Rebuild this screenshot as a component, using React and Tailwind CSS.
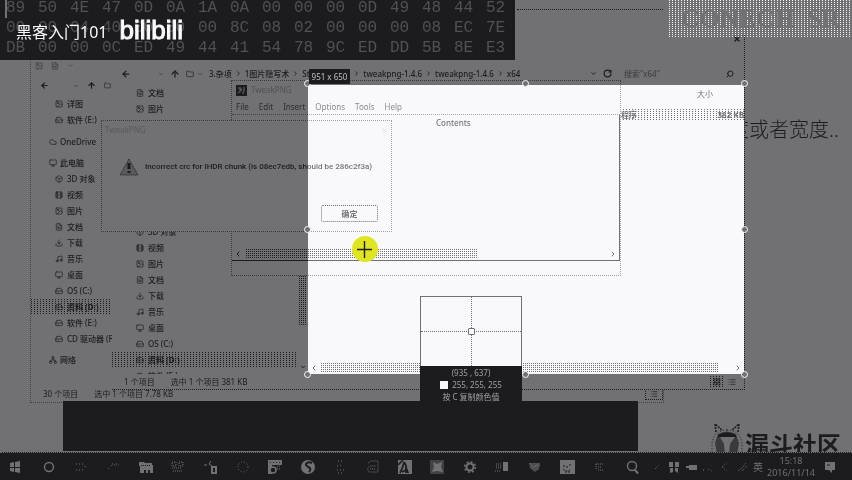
import React from "react";
import {
  ArrowLeft, ArrowUp, ChevronDown, ChevronLeft, ChevronRight, Cloud, Download, FileText, Folder,
  HardDrive, Image, LayoutGrid, List, Monitor, Music, Network, RotateCw, Search, Box, Film, X,
} from "lucide-react";

const DITHER = "bg-[conic-gradient(#1c1c1e_25%,transparent_0)] bg-[size:2px_2px]";
const DITHER_LOOSE = "bg-[conic-gradient(from_270deg_at_1px_1px,#1c1c1e_25%,transparent_0)] bg-[size:3px_2px]";

const HEX = [
  "89 50 4E 47 0D 0A 1A 0A 00 00 00 0D 49 48 44 52",
  "00 00 04 40 00 00 00 8C 08 02 00 00 00 08 EC 7E",
  "DB 00 00 0C ED 49 44 41 54 78 9C ED DD 5B 8E E3",
];

const PC_ITEMS = [
  [Box, "3D 对象"], [Film, "视频"], [Image, "图片"], [FileText, "文档"], [Download, "下载"],
  [Music, "音乐"], [Monitor, "桌面"], [HardDrive, "OS (C:)"], [HardDrive, "资料 (D:)"], [HardDrive, "软件 (E:)"],
];

function NavItem({ icon: Icon, label, root, selected, dither }) {
  return (
    <li className={selected ? dither : ""}>
      <button className={`flex h-4 w-full items-center whitespace-nowrap text-left ${root ? "gap-[3px] pl-[18px]" : "gap-1 pl-6"}`}>
        <Icon size={8} strokeWidth={2} className="shrink-0" />
        <span className={selected ? "font-bold" : "font-medium"}>{label}</span>
      </button>
    </li>
  );
}

function HexEditor() {
  return (
    <section className="absolute left-0 top-0 z-20 h-[60px] w-[515px] overflow-hidden bg-[#1c1c1e]">
      <div className="absolute left-[5px] top-0 h-[18px] w-[2px] bg-[#717173]" />
      <div className="-mt-[2px] flex flex-col pl-[6px] font-['Liberation_Mono',monospace] text-[16px] leading-[20px] text-[#515153]">
        {HEX.map((row, r) => (
          <div key={r} className="flex">
            {row.split(" ").map((b, i) => <span key={i} className="w-8 shrink-0">{b}</span>)}
          </div>
        ))}
      </div>
      <div className="absolute left-4 top-4 flex h-8 items-center gap-3 text-[#f9f9fc]">
        <span className="whitespace-nowrap text-[16px]">黑客入门101</span>
        <span className="pb-1 font-['Liberation_Sans_Narrow','Liberation_Sans',sans-serif] text-[26px] leading-7 [-webkit-text-stroke:1px_#f9f9fc]">bilibili</span>
      </div>
    </section>
  );
}

function RearExplorer() {
  return (
    <section className="absolute left-[30px] top-[60px] flex h-[343px] w-[634px] flex-col border border-dotted border-[#414143] border-t-transparent bg-[#717173]">
      <div className="flex h-4 items-start gap-2 pl-1 pt-px text-[#3a3a3c]">
        <Image size={8} /><FileText size={8} /><ChevronDown size={7} />
      </div>
      <div className="flex h-[19px] items-center pb-[2px] pl-[9px]">
        <ArrowLeft size={9} strokeWidth={3} className="mr-6" /><ChevronDown size={6} className="mr-2" />
        <ArrowUp size={9} strokeWidth={3} className="mr-2" /><Folder size={7} />
      </div>
      <ul className="w-[82px] flex-1 overflow-hidden">
        <NavItem icon={Image} label="详图" />
        <NavItem icon={HardDrive} label="软件 (E:)" />
        <li className="h-[6px]" />
        <NavItem icon={Cloud} label="OneDrive" root />
        <li className="h-[5px]" />
        <NavItem icon={Monitor} label="此电脑" root />
        {PC_ITEMS.map(([I, t], i) => <NavItem key={t} icon={I} label={t} selected={i === 8} dither={DITHER_LOOSE} />)}
        <NavItem icon={HardDrive} label="CD 驱动器 (F:)" />
        <li className="h-[5px]" />
        <NavItem icon={Network} label="网络" root />
      </ul>
      <footer className="flex h-[17px] shrink-0 items-center gap-4 pl-3">
        <span>30 个项目</span><span>选中 1 个项目 7.78 KB</span>
        <span className="ml-auto flex h-3 w-[18px] items-center justify-center border border-dotted border-[#1c1c1e]"><List size={8} /></span>
      </footer>
    </section>
  );
}

function Crumb({ children }) {
  return (
    <>
      <a href="#path" className="shrink-0 font-medium">{children}</a>
      <ChevronRight size={7} className="mx-[3px] shrink-0" strokeWidth={3} />
    </>
  );
}

function FrontExplorer() {
  return (
    <section className="absolute left-[112px] top-[34px] flex h-[356px] w-[633px] flex-col border-b border-r border-dotted border-[#1c1c1e] bg-[#717173]">
      <div className="flex h-[30px] justify-end pr-[3px] pt-px">
        <button aria-label="关闭" className="h-2"><X size={8} strokeWidth={4} /></button>
      </div>
      <div className="flex h-[21px] items-center pb-[2px] pl-[9px]">
        <ArrowLeft size={10} strokeWidth={3} className="mr-[27px]" />
        <ChevronDown size={6} className="mr-[6px]" />
        <ArrowUp size={10} strokeWidth={3} className="mr-[6px]" />
        <Folder size={8} className="mr-[3px]" />
        <ChevronDown size={6} className="mr-[6px]" />
        <nav className="flex flex-1 items-center whitespace-nowrap">
          <Crumb>3.杂项</Crumb><Crumb>1图片隐写术</Crumb>
          <Crumb><span className="block w-[48px]">StegTools</span></Crumb>
          <Crumb>tweakpng-1.4.6</Crumb><Crumb>tweakpng-1.4.6</Crumb>
          <a href="#path" className="font-medium">x64</a>
        </nav>
        <ChevronDown size={7} className="mr-[6px]" strokeWidth={3} />
        <RotateCw size={9} className="mr-3" strokeWidth={3} />
        <input aria-label="搜索" placeholder={'搜索"x64"'} className="w-[102px] bg-transparent text-[8px] placeholder:text-[#3a3a3c]" />
        <Search size={8} className="mr-[10px] -scale-x-100" strokeWidth={3} />
      </div>
      <div className="flex min-h-0 flex-1">
        <ul className="w-[185px] overflow-hidden">
          <NavItem icon={FileText} label="文档" />
          <NavItem icon={Image} label="图片" />
          <li className="h-[107px]" />
          {PC_ITEMS.map(([I, t], i) => <NavItem key={t} icon={I} label={t} selected={i === 8} dither={DITHER_LOOSE} />)}
        </ul>
        <div className="flex w-[11px] flex-col items-center justify-between pb-1">
          <div className={`mt-[191px] h-[50px] w-[9px] ${DITHER}`} />
          <ChevronDown size={6} strokeWidth={4} />
        </div>
        <div className="flex flex-1 flex-col">
          <div className="flex h-[18px] items-center justify-end pr-[31px]">大小</div>
          <div className={`mt-[6px] flex h-3 items-center justify-between pl-[313px] font-bold ${DITHER_LOOSE}`}>
            <span>程序</span><span>382 KB</span>
          </div>
          <div className="mt-auto flex h-[13px] items-center gap-[2px] px-[2px]">
            <ChevronLeft size={8} strokeWidth={3} />
            <div className={`mr-[14px] h-[9px] flex-1 ${DITHER}`} />
            <ChevronRight size={8} strokeWidth={3} />
          </div>
        </div>
      </div>
      <footer className="flex h-[15px] shrink-0 items-center gap-4 pl-3 pr-2">
        <span>1 个项目</span><span>选中 1 个项目 381 KB</span>
        <span className="ml-auto flex items-center gap-1">
          <span className={`flex h-3 w-[14px] items-center justify-center ${DITHER_LOOSE}`}><LayoutGrid size={8} /></span>
          <List size={8} />
        </span>
      </footer>
    </section>
  );
}

function TweakPng() {
  return (
    <section className="absolute left-[231px] top-[80px] flex h-[196px] w-[390px] flex-col border border-dotted border-[#3a3a3c] bg-[#717173]">
      <header className="flex h-[18px] items-center gap-1 pl-[4px]">
        <svg viewBox="0 0 11 11" className="h-[11px] w-[11px]">
          <rect width="11" height="11" fill="#1c1c1e" />
          <path d="M2 3h3M3 5l3-1M2 8l4-3M8 2v5M6 8h2" stroke="#717173" fill="none" />
        </svg>
        <span className="text-[#515153]">TweakPNG</span>
      </header>
      <nav className="flex h-4 items-center gap-[10px] border-b border-dotted border-[#414143] pl-1 text-[#2c2c2e]">
        {["File", "Edit", "Insert", "Options", "Tools", "Help"].map((m) => <button key={m}>{m}</button>)}
      </nav>
      <div className="flex flex-1 flex-col border-b border-r border-[#1c1c1e]">
        <div className="flex h-4 items-center pl-[204px] font-medium">Contents</div>
        <div className="mt-auto flex h-[13px] items-center gap-[3px] px-[2px]">
          <ChevronLeft size={8} strokeWidth={3} />
          <div className={`h-[9px] w-[233px] ${DITHER}`} />
          <ChevronRight size={8} strokeWidth={3} className="ml-auto" />
        </div>
      </div>
      <div className="h-[14px]" />
    </section>
  );
}

function ErrorDialog() {
  return (
    <section role="alertdialog" className="absolute left-[101px] top-[120px] flex h-[112px] w-[291px] flex-col border border-dotted border-[#3a3a3c] bg-[#717173]">
      <header className="flex h-[18px] items-center justify-between px-[3px] text-[#5a5a5c]">
        <span>TweakPNG</span>
        <button aria-label="关闭"><X size={7} /></button>
      </header>
      <div className="flex flex-1 items-center gap-[6px] pb-[10px] pl-[17px]">
        <svg viewBox="0 0 20 18" className="h-[18px] w-5">
          <path d="M10 1L19 17H1Z" fill="#5a5a5c" stroke="#1c1c1e" strokeDasharray="1 1" />
          <path d="M10 5v6M10 13v2" stroke="#1c1c1e" strokeWidth="3" />
        </svg>
        <p className="whitespace-nowrap font-['Roboto',sans-serif] font-medium">Incorrect crc for IHDR chunk (is 08ec7edb, should be 286c2f3a)</p>
      </div>
      <footer className="flex justify-end pb-[9px] pr-[13px]">
        <button className="h-[17px] w-[57px] rounded-[2px] border border-dotted border-[#1c1c1e] font-bold">确定</button>
      </footer>
    </section>
  );
}

function Handle({ className }) {
  return <span className={`absolute h-[7px] w-[7px] rounded-full border border-[#f9f9fc] bg-[#717173] ${className}`} />;
}

function Selection() {
  return (
    <>
      <div className="absolute left-[308px] top-[85px] h-[289px] w-[436px] [backdrop-filter:invert(12.5%)_brightness(213.3%)]" />
      <div className="absolute left-[308px] top-[84px] h-[290px] w-[436px]">
        <Handle className="-left-1 -top-1" />
        <Handle className="-top-1 left-[214px]" />
        <Handle className="-right-1 -top-1" />
        <Handle className="-left-1 top-[142px]" />
        <Handle className="-right-1 top-[142px]" />
        <Handle className="-bottom-1 -left-1" />
        <Handle className="-bottom-1 left-[214px]" />
        <Handle className="-bottom-1 -right-1" />
      </div>
      <div className="absolute left-[309px] top-[69px] flex h-[15px] w-[41px] items-center justify-center whitespace-nowrap bg-[#1c1c1e] pt-px text-[#c0c0c3]">951 x 650</div>
      <svg viewBox="0 0 26 26" className="absolute left-[352px] top-[236px] h-[26px] w-[26px]">
        <circle cx="13" cy="13" r="13" fill="#dfe620" />
        <path d="M12.5 5v17M5 13.5h15" stroke="#1c1c1e" strokeWidth="1.4" />
      </svg>
    </>
  );
}

function Magnifier() {
  return (
    <section className="absolute left-[420px] top-[296px] flex w-[102px] flex-col">
      <div className="relative h-[70px] border border-b-0 border-[#717173] bg-[#f9f9fc]">
        <div className="absolute inset-x-0 top-[34px] border-t border-dotted border-[#717173]" />
        <div className="absolute inset-y-0 left-[50px] border-l border-dotted border-[#717173]" />
        <div className="absolute left-[47px] top-[31px] h-[7px] w-[7px] rounded-[1px] border border-[#717173] bg-[#f9f9fc]" />
      </div>
      <div className="flex h-[36px] flex-col items-center bg-[#1c1c1e] pt-px leading-[12px] text-[#a0a0a3]">
        <span>(935 , 637)</span>
        <span className="flex items-center gap-1"><span className="h-2 w-2 bg-[#f9f9fc]" />255, 255, 255</span>
        <span className="leading-[11px]">按 C 复制颜色值</span>
      </div>
    </section>
  );
}

function BrandMark() {
  return (
    <div className="absolute -bottom-[5px] right-[11px] flex items-start gap-[2px]">
      <svg viewBox="0 0 32 34" className="-mt-[9px] h-[34px] w-8">
        <path d="M5 9L4 1l7 6M27 9l1-8-7 6" fill="none" stroke="#1c1c1e" strokeWidth="1.6" strokeDasharray="2 1" />
        <path d="M16 7C6 7 1 14 1 22v10M16 7c10 0 15 7 15 15v10" fill="none" stroke="#1c1c1e" strokeDasharray="1 2" />
        <path d="M7 11q9-5 18 0l3 9-2 12H6L4 20Z" fill="#3a3a3c" />
        <path d="M7 12q9-5 18 0v2H7Z" fill="#1c1c1e" />
        <path d="M9 14h15l-5 7-1 11h-4l-1-11Z" fill="#717173" />
      </svg>
      <span className="text-[24px] font-bold leading-[25px]">漏斗社区</span>
    </div>
  );
}

const DOTS = { fill: "none", stroke: "#717173", strokeWidth: 1, strokeDasharray: "1 1" };
const APPS = [
  ["开始", <path d="M1 3l4-1v5H1zM6 2l5-1v6H6zM1 8h4v4l-4-1zM6 8h5v5l-5-1z" fill="#717173" />],
  ["Cortana", <circle cx="7" cy="7" r="4.5" fill="none" stroke="#717173" strokeWidth="1.4" />],
  ["任务视图", <path d="M2 4h8M2 10h8M11 6v2" {...DOTS} strokeDasharray="1 2" />],
  ["Edge", <path d="M2 9l4-4h7M6 4h7" {...DOTS} strokeDasharray="1 3" />],
  ["文件资源管理器", <><path d="M0 2h5l1 1h7v2h1v8h-3v-3h-2v3H7v-3H5v3H1V6H0z" fill="#717173" /><path d="M2 5.5h10" stroke="#1c1c1e" strokeDasharray="1 1" /></>],
  ["商店", <path d="M1 2h4v4H1zM8 2h4v4H8zM1 8h10M2 11h10" {...DOTS} />],
  ["迅雷", <><path d="M0 5h3M7 1l-2 3 3 2" stroke="#717173" fill="none" /><rect x="8" y="7" width="4" height="6" fill="none" stroke="#717173" strokeWidth="2" /></>],
  ["浏览器", <circle cx="7" cy="7" r="5" {...DOTS} strokeDasharray="1 2" />],
  ["虚拟机", <><path d="M0 0h14v5H4v9H0z" fill="#717173" /><path d="M2 2.5h11" stroke="#1c1c1e" strokeDasharray="1 2" /><circle cx="5" cy="10" r="3" fill="#1c1c1e" stroke="#717173" strokeWidth="1.5" /><path d="M9 7l3-1M9 9h3" {...DOTS} /></>],
  ["搜狗", <><circle cx="7" cy="7" r="7" fill="#717173" /><path d="M11 3C7 1 3 4 6 6s5 3 2 6" fill="none" stroke="#1c1c1e" strokeWidth="2" /></>],
  ["QQ", <path d="M5 1h4M4 6l5-1M4 10h7M5 13h5" {...DOTS} strokeDasharray="1 2" />],
  ["便笺", <path d="M2 3l3-2h7v11H3q-3-4 1-6h6M4 9h5" {...DOTS} />],
  ["编辑器", <><rect width="14" height="14" fill="#717173" /><path d="M0 5l5-5M6 2q3 4 2 8l-4 2M2 13q3-5 4-11" stroke="#1c1c1e" strokeWidth="1.6" fill="none" /><path d="M8 5l3 8H7z" fill="#1c1c1e" /></>],
  ["工具", <><rect width="14" height="14" fill="#414143" /><path d="M3 2l4 2 5-2-1 5 2 5-6-1-5 1 2-5z" fill="#717173" /></>],
  ["设置", <><circle cx="7" cy="7" r="3.5" fill="none" stroke="#717173" strokeWidth="2" /><circle cx="7" cy="7" r="5.3" fill="none" stroke="#717173" strokeWidth="1.6" strokeDasharray="2 2.16" /></>],
  ["照片", <><path d="M8 2h5v9H8z" fill="#717173" /><path d="M1 4h6M1 6h6M1 8h6M0 11h6" {...DOTS} /></>],
  ["终端", <><path d="M1 3h11l-1 6-4 3-5-4z" fill="#4d4d4f" /><path d="M1 3l5 4 6-2M4 9l5-5" {...DOTS} /></>],
  ["TweakPNG", <><rect width="15" height="14" fill="#717173" /><path d="M3 9q4 4 8 0M4 5v2M10 4v3M7 6v3M5 12h5" stroke="#1c1c1e" fill="none" strokeDasharray="2 1" /></>],
  ["记事本", <path d="M3 4h8M3 4v6M5 7h4M5 10h6" {...DOTS} />],
  ["搜索", <><circle cx="7" cy="6" r="4.5" fill="none" stroke="#717173" strokeWidth="1.4" /><path d="M10 10l3 3.5" stroke="#717173" strokeWidth="2" /></>],
];
const TRAY = [
  ["展开", <path d="M5 9l4-4" {...DOTS} />],
  ["安全", <path d="M2 2h4v5H2zM8 2h4v5H8zM3 8h3v4l-3 1zM8 8h3v5l-3-2z" fill="#717173" />],
  ["电源", <path d="M2 6h3V5h8v5H5V8H2z" fill="#717173" />],
  ["网络", <path d="M2 10h2M7 9l4 2" {...DOTS} strokeDasharray="1 2" />],
  ["音量", <path d="M4 7l5-4M4 7l5 4" {...DOTS} strokeDasharray="1 2" />],
  ["链接", <path d="M3 11l4-3 4-5M7 11l5-5" {...DOTS} />],
];

function TaskIcon({ name, children }) {
  return (
    <button aria-label={name} className="flex flex-1 items-center justify-center">
      <svg viewBox="0 0 14 14" className="h-[14px] w-[14px] overflow-visible">{children}</svg>
    </button>
  );
}

function Taskbar() {
  return (
    <footer className="flex h-7 shrink-0 border-t border-dotted border-[#717173] bg-[#1c1c1e] text-[#717173]">
      <div className="flex w-[648px] shrink-0">
        {APPS.map(([n, g]) => <TaskIcon key={n} name={n}>{g}</TaskIcon>)}
      </div>
      <div className="flex w-[102px] shrink-0">
        {TRAY.map(([n, g]) => <TaskIcon key={n} name={n}>{g}</TaskIcon>)}
      </div>
      <button className="w-4 text-[10px]">英</button>
      <time className="flex flex-1 flex-col items-center pt-[2px] text-[9px] leading-[12px]">
        <span>15:18</span><span>2016/11/14</span>
      </time>
      <button aria-label="通知" className="flex w-9 items-center pl-2">
        <svg viewBox="0 0 12 12" className="h-3 w-3"><path d="M1 1h10v8H8v3L5 9H1z" fill="#717173" /><path d="M3 4h3" stroke="#1c1c1e" /></svg>
      </button>
    </footer>
  );
}

export default function App() {
  return (
    <main className="flex h-screen flex-col overflow-hidden bg-[#717173] font-['Noto_Sans','Noto_Sans_CJK_SC',sans-serif] text-[8px] leading-[12px] text-[#1c1c1e]">
      <div className="relative min-h-0 flex-1 overflow-hidden">
        <div className="absolute left-[517px] top-[9px] w-[146px] border-t border-dotted border-[#1c1c1e]" />
        <p className="absolute left-[729px] top-[118px] whitespace-nowrap text-[20px] font-light leading-6">度或者宽度..</p>
        <RearExplorer />
        <FrontExplorer />
        <TweakPng />
        <ErrorDialog />
        <HexEditor />
        <div className="absolute left-[63px] top-[401px] h-[51px] w-[575px] border-b border-[#717173] bg-[#1c1c1e]" />
        <Selection />
        <Magnifier />
        <div className="absolute right-0 top-0 flex h-[37px] w-[183px] items-center justify-center gap-3 bg-[conic-gradient(from_270deg_at_1px_1px,#f9f9fc_25%,transparent_0)] bg-[size:3px_2px] font-['Liberation_Serif',serif] text-[26px] font-bold text-[#717173]">
          <span>CONECH</span><span>SR</span>
        </div>
        <BrandMark />
      </div>
      <Taskbar />
    </main>
  );
}
